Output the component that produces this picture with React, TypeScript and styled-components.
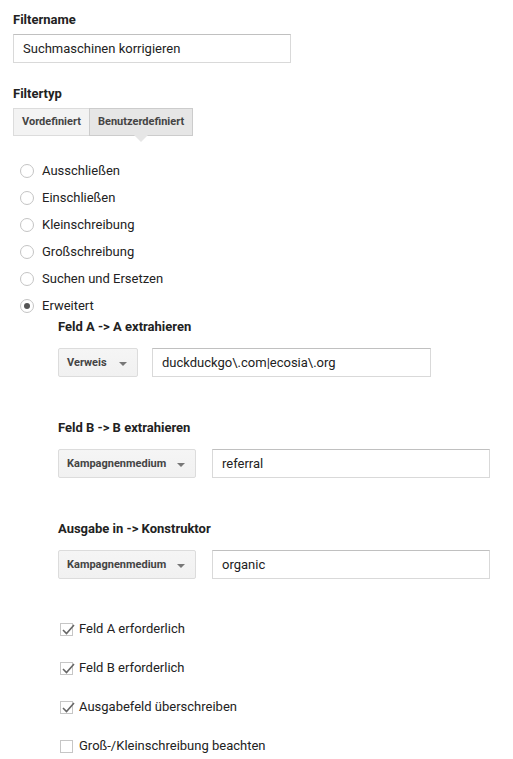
import React from 'react';
import styled, { createGlobalStyle } from 'styled-components';

const GlobalStyle = createGlobalStyle`
  html, body {
    margin: 0;
    padding: 0;
    background: #fff;
  }
  body {
    font-family: Roboto, "Liberation Sans", Arial, sans-serif;
    color: #222;
  }
`;

const Page = styled.div`
  padding: 12px 13px 0 13px;
  width: 513px;
  box-sizing: border-box;
`;

const Label = styled.div`
  font-size: 13px;
  font-weight: bold;
  color: #222;
  line-height: 16px;
`;

const TextInput = styled.div<{ $width: number }>`
  box-sizing: border-box;
  width: ${(p) => p.$width}px;
  height: 29px;
  border: 1px solid #d9d9d9;
  border-top-color: #c0c0c0;
  padding: 0 9px;
  font-size: 13px;
  line-height: 27px;
  color: #222;
  background: #fff;
`;

const Section = styled.div<{ $top: number }>`
  margin-top: ${(p) => p.$top}px;
  display: flex;
  flex-direction: column;
  gap: 6px;
`;

const ButtonGroup = styled.div`
  display: flex;
  align-self: flex-start;
`;

const ToggleButton = styled.div<{ $active?: boolean }>`
  position: relative;
  box-sizing: border-box;
  height: 28px;
  padding: 0 8px;
  font-size: 11px;
  font-weight: bold;
  color: #444;
  line-height: 26px;
  border: 1px solid ${(p) => (p.$active ? '#ccc' : '#dcdcdc')};
  background: ${(p) => (p.$active ? '#e6e6e6' : '#f3f3f3')};
  & + & {
    margin-left: -1px;
  }
  ${(p) =>
    p.$active &&
    `
    &::after {
      content: '';
      position: absolute;
      left: 50%;
      bottom: -7px;
      margin-left: -7px;
      border-left: 7px solid transparent;
      border-right: 7px solid transparent;
      border-top: 7px solid #e6e6e6;
    }
  `}
`;

const RadioList = styled.div`
  margin-top: 27px;
  display: flex;
  flex-direction: column;
  gap: 11px;
  padding-left: 7px;
`;

const RadioRow = styled.div`
  display: flex;
  align-items: center;
  gap: 8px;
  font-size: 13px;
  line-height: 16px;
  color: #222;
`;

const RadioCircle = styled.span<{ $checked?: boolean }>`
  box-sizing: border-box;
  width: 14px;
  height: 14px;
  border-radius: 50%;
  border: 1px solid #c4c4c4;
  display: flex;
  align-items: center;
  justify-content: center;
  &::after {
    content: '';
    width: 6px;
    height: 6px;
    border-radius: 50%;
    background: ${(p) => (p.$checked ? '#555' : 'transparent')};
  }
`;

const Advanced = styled.div`
  padding-left: 45px;
  display: flex;
  flex-direction: column;
`;

const FieldBlock = styled.div<{ $top: number }>`
  margin-top: ${(p) => p.$top}px;
  display: flex;
  flex-direction: column;
  gap: 13px;
`;

const FieldRow = styled.div<{ $gap: number }>`
  display: flex;
  align-items: center;
  gap: ${(p) => p.$gap}px;
`;

const Dropdown = styled.div<{ $width: number }>`
  box-sizing: border-box;
  width: ${(p) => p.$width}px;
  height: 29px;
  border: 1px solid #dcdcdc;
  background: linear-gradient(#f5f5f5, #f1f1f1);
  border-radius: 2px;
  display: flex;
  align-items: center;
  justify-content: space-between;
  padding: 0 10px 0 8px;
  font-size: 11px;
  font-weight: bold;
  color: #444;
`;

const Caret = styled.span`
  width: 0;
  height: 0;
  border-left: 4px solid transparent;
  border-right: 4px solid transparent;
  border-top: 4px solid #777;
  margin-top: 2px;
`;

const CheckList = styled.div`
  margin-top: 42px;
  display: flex;
  flex-direction: column;
  gap: 23px;
  padding-left: 2px;
`;

const CheckRow = styled.div`
  display: flex;
  align-items: center;
  gap: 6px;
  font-size: 13px;
  line-height: 16px;
  color: #222;
`;

const CheckBox = styled.span`
  box-sizing: border-box;
  width: 13px;
  height: 13px;
  border: 1px solid #c6c6c6;
  background: #fff;
  position: relative;
  display: block;
  svg {
    position: absolute;
    left: 0;
    top: -2px;
  }
`;

const radios = [
  'Ausschließen',
  'Einschließen',
  'Kleinschreibung',
  'Großschreibung',
  'Suchen und Ersetzen',
  'Erweitert',
];

const fields = [
  { label: 'Feld A -> A extrahieren', select: 'Verweis', selectW: 80, gap: 14, value: 'duckduckgo\\.com|ecosia\\.org', inputW: 279, top: 5 },
  { label: 'Feld B -> B extrahieren', select: 'Kampagnenmedium', selectW: 138, gap: 16, value: 'referral', inputW: 278, top: 43 },
  { label: 'Ausgabe in -> Konstruktor', select: 'Kampagnenmedium', selectW: 138, gap: 16, value: 'organic', inputW: 278, top: 43 },
];

const checks = [
  { label: 'Feld A erforderlich', checked: true },
  { label: 'Feld B erforderlich', checked: true },
  { label: 'Ausgabefeld überschreiben', checked: true },
  { label: 'Groß-/Kleinschreibung beachten', checked: false },
];

export default function App() {
  return (
    <Page>
      <GlobalStyle />
      <Section $top={0}>
        <Label>Filtername</Label>
        <TextInput $width={278}>Suchmaschinen korrigieren</TextInput>
      </Section>
      <Section $top={23}>
        <Label>Filtertyp</Label>
        <ButtonGroup>
          <ToggleButton>Vordefiniert</ToggleButton>
          <ToggleButton $active>Benutzerdefiniert</ToggleButton>
        </ButtonGroup>
      </Section>
      <RadioList>
        {radios.map((r) => (
          <RadioRow key={r}>
            <RadioCircle $checked={r === 'Erweitert'} />
            {r}
          </RadioRow>
        ))}
      </RadioList>
      <Advanced>
        {fields.map((f) => (
          <FieldBlock key={f.label} $top={f.top}>
            <Label>{f.label}</Label>
            <FieldRow $gap={f.gap}>
              <Dropdown $width={f.selectW}>
                {f.select}
                <Caret />
              </Dropdown>
              <TextInput $width={f.inputW}>{f.value}</TextInput>
            </FieldRow>
          </FieldBlock>
        ))}
        <CheckList>
          {checks.map((c) => (
            <CheckRow key={c.label}>
              <CheckBox>
                {c.checked && (
                  <svg width="15" height="14" viewBox="0 0 15 14">
                    <path d="M2 8 L5.5 11.5 L13 3" fill="none" stroke="#666" strokeWidth="1.6" />
                  </svg>
                )}
              </CheckBox>
              {c.label}
            </CheckRow>
          ))}
        </CheckList>
      </Advanced>
    </Page>
  );
}
